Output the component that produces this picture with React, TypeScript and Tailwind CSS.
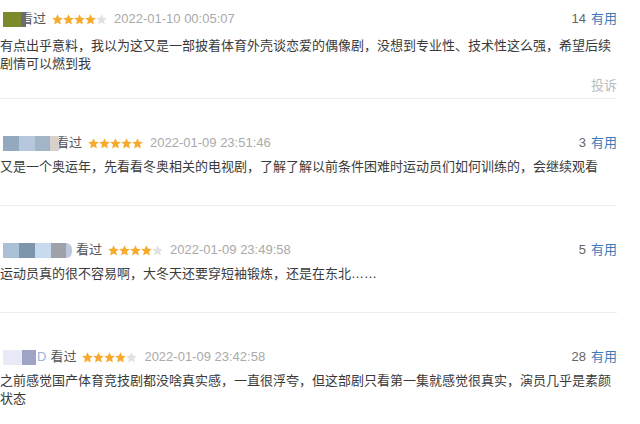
import React from "react";

type Review = {
  blocks: { w: number; c: string; round?: boolean }[];
  tail?: React.ReactNode;
  overlap?: boolean;
  stars: number;
  date: string;
  votes: number;
  text: React.ReactNode;
  report?: boolean;
};

const reviews: Review[] = [
  {
    blocks: [
      { w: 18, c: "#7c8a2c" },
      { w: 5, c: "#6d6d6d" },
    ],
    overlap: true,
    stars: 4,
    date: "2022-01-10 00:05:07",
    votes: 14,
    text: "有点出乎意料，我以为这又是一部披着体育外壳谈恋爱的偶像剧，没想到专业性、技术性这么强，希望后续剧情可以燃到我",
    report: true,
  },
  {
    blocks: [
      { w: 16, c: "#93a9c0" },
      { w: 16, c: "#b7c8dc" },
      { w: 15, c: "#a2b4c8" },
      { w: 9, c: "#d9d0ca" },
    ],
    overlap: true,
    stars: 5,
    date: "2022-01-09 23:51:46",
    votes: 3,
    text: "又是一个奥运年，先看看冬奥相关的电视剧，了解了解以前条件困难时运动员们如何训练的，会继续观看",
  },
  {
    blocks: [
      { w: 16, c: "#abc0d5" },
      { w: 16, c: "#7d95ad" },
      { w: 16, c: "#c8daed" },
      { w: 15, c: "#9ea1a8" },
      { w: 6, c: "#bcc7de", round: true },
    ],
    stars: 4,
    date: "2022-01-09 23:49:58",
    votes: 5,
    text: "运动员真的很不容易啊，大冬天还要穿短袖锻炼，还是在东北……",
  },
  {
    blocks: [
      { w: 19, c: "#e8eaf7" },
      { w: 14, c: "#a0a4c4" },
    ],
    tail: <span className="text-[#9bb4de] ml-[1px]">D</span>,
    stars: 4,
    date: "2022-01-09 23:42:58",
    votes: 28,
    text: (
      <>
        之前感觉国产体育竞技剧都没啥真实感，一直很浮夸，但这部剧只看第一集就感觉很真实，演员几乎是素颜
        <br />
        状态
      </>
    ),
  },
];

function Star({ on }: { on: boolean }) {
  return (
    <svg width="11" height="11" viewBox="0 0 20 20">
      <path
        d="M10 0.3l2.9 6.3 6.9.7-5.2 4.7 1.5 6.9L10 15.4l-6.1 3.5 1.5-6.9L0.2 7.3l6.9-.7z"
        fill={on ? "#f6ab2f" : "#e2e2e2"}
      />
    </svg>
  );
}

export default function App() {
  return (
    <div
      className="w-[640px] h-[424px] bg-white overflow-hidden"
      style={{ fontFamily: '"Liberation Sans", "Noto Sans CJK SC", sans-serif' }}
    >
      <div className="w-[617px]">
        {reviews.map((r, i) => (
          <div
            key={i}
            className={
              i === 0
                ? "pt-[9px] pb-[3px] border-b border-[#ededed]"
                : i === 3
                ? "pt-[34px]"
                : "pt-[34px] pb-[29px] border-b border-[#ededed]"
            }
          >
            <div className="flex items-center h-5 text-[13px]">
              <div className="flex items-center pl-[3px] relative z-10">
                {r.blocks.map((b, j) => (
                  <div
                    key={j}
                    className={b.round ? "h-[15px] rounded-r-full" : "h-[15px]"}
                    style={{ width: b.w, backgroundColor: b.c }}
                  />
                ))}
                {r.tail}
              </div>
              <span className={r.overlap ? (i === 0 ? "text-[#555] -ml-[6px]" : "text-[#555] -ml-[3px]") : "text-[#555] ml-[4px]"}>
                看过
              </span>
              <div className="flex ml-[6px]">
                {[0, 1, 2, 3, 4].map((s) => (
                  <Star key={s} on={s < r.stars} />
                ))}
              </div>
              <span className="ml-[7px] text-[#aaaaaa]">{r.date}</span>
              <div className="flex-1 flex justify-end">
                <span className="text-[#666]">{r.votes}</span>
                <span className="ml-[5px] text-[#3d7ab8]">有用</span>
              </div>
            </div>
            <p
              className={
                i === 0
                  ? "mt-[8px] text-[13px] leading-[18px] text-[#3a3a3a]"
                  : "mt-[5px] text-[13px] leading-[18px] text-[#3a3a3a]"
              }
            >
              {r.text}
            </p>
            {r.report && (
              <div className="mt-1 h-[18px] text-right text-[13px] leading-[18px] text-[#bbbbbb]">投诉</div>
            )}
          </div>
        ))}
      </div>
    </div>
  );
}
